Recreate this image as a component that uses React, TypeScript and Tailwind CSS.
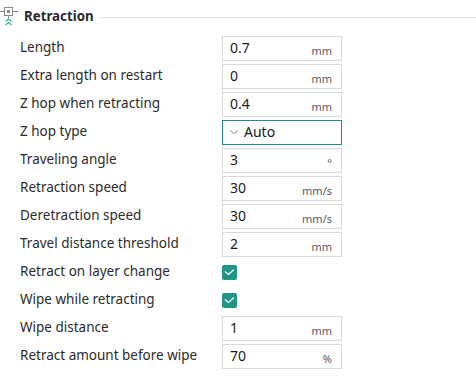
import React from "react";

type Row =
  | { label: string; kind: "input"; value: string; unit: string }
  | { label: string; kind: "select"; value: string }
  | { label: string; kind: "check" };

const rows: Row[] = [
  { label: "Length", kind: "input", value: "0.7", unit: "mm" },
  { label: "Extra length on restart", kind: "input", value: "0", unit: "mm" },
  { label: "Z hop when retracting", kind: "input", value: "0.4", unit: "mm" },
  { label: "Z hop type", kind: "select", value: "Auto" },
  { label: "Traveling angle", kind: "input", value: "3", unit: "°" },
  { label: "Retraction speed", kind: "input", value: "30", unit: "mm/s" },
  { label: "Deretraction speed", kind: "input", value: "30", unit: "mm/s" },
  { label: "Travel distance threshold", kind: "input", value: "2", unit: "mm" },
  { label: "Retract on layer change", kind: "check" },
  { label: "Wipe while retracting", kind: "check" },
  { label: "Wipe distance", kind: "input", value: "1", unit: "mm" },
  { label: "Retract amount before wipe", kind: "input", value: "70", unit: "%" },
];

function HeaderIcon() {
  return (
    <svg width="18" height="24" viewBox="0 0 18 24" fill="none">
      <line x1="0" y1="6.5" x2="4" y2="6.5" stroke="#888" strokeWidth="1" />
      <line x1="13" y1="6.5" x2="18" y2="6.5" stroke="#888" strokeWidth="1" />
      <rect x="4.5" y="2.5" width="8" height="8" stroke="#888" strokeWidth="1" />
      <rect x="7" y="5" width="3" height="3" fill="#888" />
      <line x1="8.5" y1="10.5" x2="8.5" y2="13" stroke="#888" strokeWidth="1" />
      <path d="M5.5 16.5 L8.5 14 L11.5 16.5" stroke="#2fb39d" strokeWidth="1.2" />
      <path d="M5.5 20 L8.5 17.5 L11.5 20" stroke="#2fb39d" strokeWidth="1.2" />
    </svg>
  );
}

export default function App() {
  return (
    <div
      className="w-[476px] h-[381px] bg-white overflow-hidden text-[#262626]"
      style={{ fontFamily: '"Noto Sans", "Open Sans", sans-serif' }}
    >
      <div className="flex items-center h-[31px] pt-[3px]">
        <div className="w-[22px] flex items-center">
          <HeaderIcon />
        </div>
        <div className="text-[13.3px] font-bold text-[#2b2b2b] ml-[2px]">Retraction</div>
        <div className="flex-1 h-px bg-[#e3e3e3] ml-[6px]" />
      </div>
      <div className="flex flex-col pt-[3px]">
        {rows.map((r, i) => (
          <div key={i} className="flex items-center h-[28px]">
            <div className="w-[222px] pl-[20px] text-[13.5px] text-[#2b2b2b] leading-none">{r.label}</div>
            {r.kind === "input" && (
              <div className="w-[120px] h-[25px] border border-[#d9d9d9] flex items-center pl-[7px] pr-[9px]">
                <span className="flex-1 text-[14px] text-[#1a1a1a] leading-none">{r.value}</span>
                <span className="text-[11px] text-[#5a5a5a] leading-none mt-[5px]">{r.unit}</span>
              </div>
            )}
            {r.kind === "select" && (
              <div className="w-[120px] h-[25px] border border-[#1f8f7e] flex items-center pl-[6px]">
                <svg width="10" height="6" viewBox="0 0 10 6" fill="none" className="mr-[5px]">
                  <path d="M1 1.5 L5 4.5 L9 1.5" stroke="#8a8a8a" strokeWidth="1" />
                </svg>
                <span className="text-[14px] text-[#1a1a1a] leading-none">{r.value}</span>
              </div>
            )}
            {r.kind === "check" && (
              <div className="w-[15px] h-[15px] rounded-[2px] bg-[#1f9683] flex items-center justify-center">
                <svg width="11" height="8" viewBox="0 0 11 8" fill="none">
                  <path d="M1 3.5 L4.5 6.5 L10 1.5" stroke="#ffffff" strokeWidth="1.3" />
                </svg>
              </div>
            )}
          </div>
        ))}
      </div>
    </div>
  );
}
